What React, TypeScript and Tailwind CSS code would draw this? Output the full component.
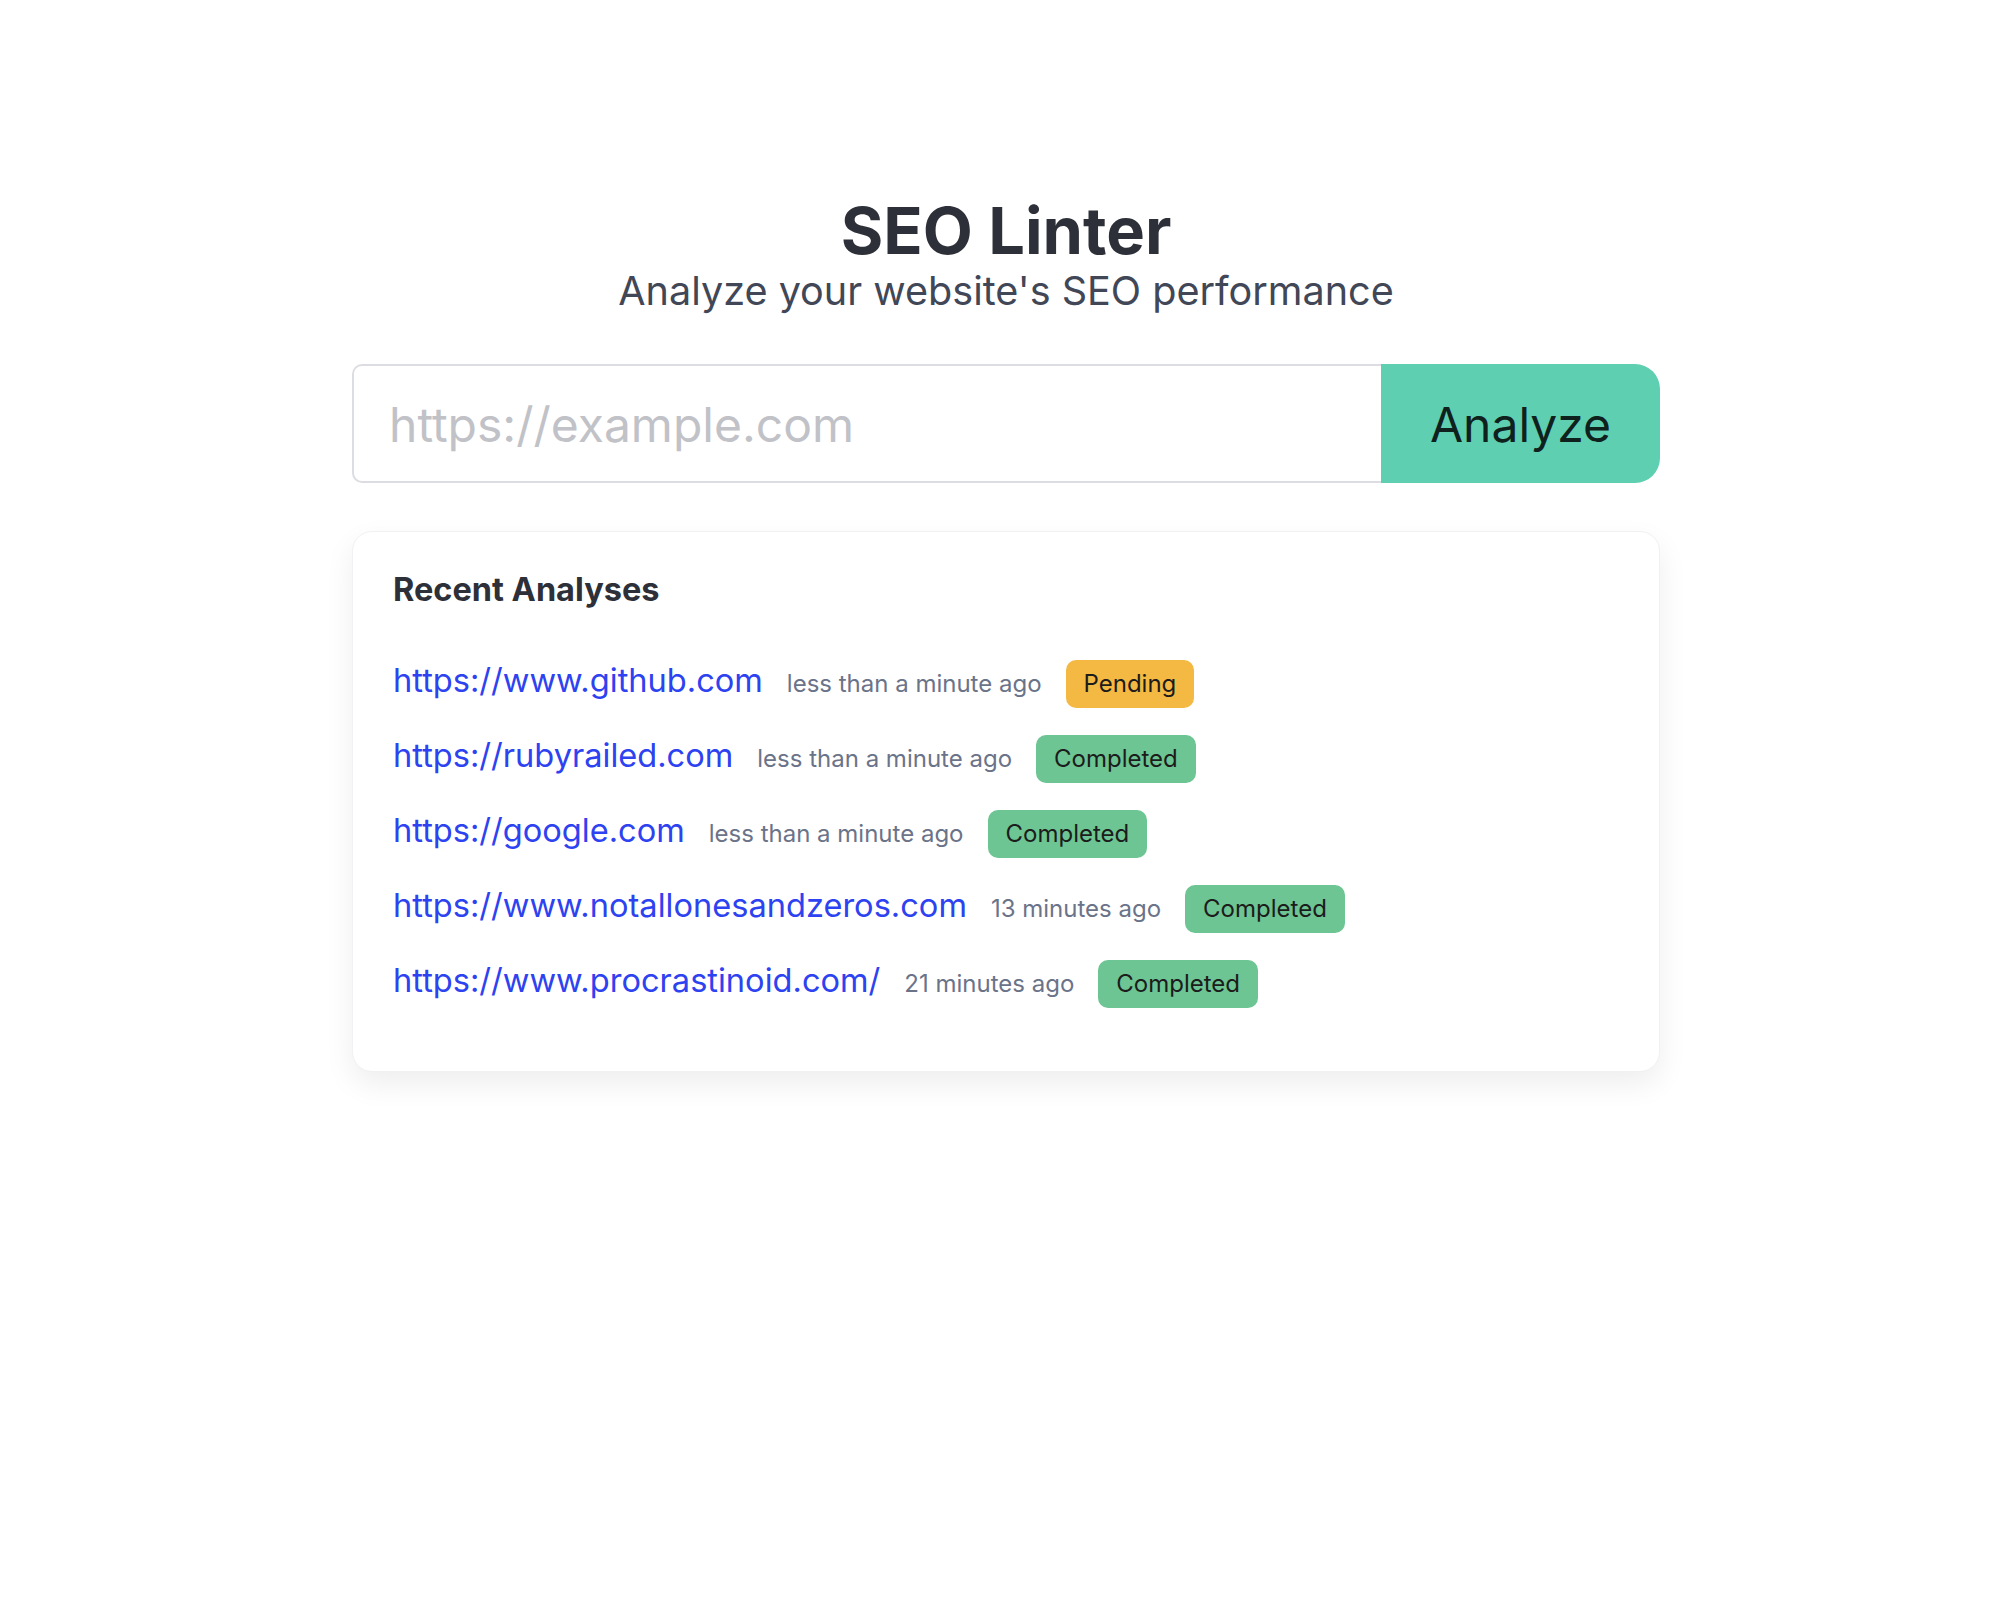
const analyses = [
  { url: 'https://www.github.com', time: 'less than a minute ago', status: 'Pending' },
  { url: 'https://rubyrailed.com', time: 'less than a minute ago', status: 'Completed' },
  { url: 'https://google.com', time: 'less than a minute ago', status: 'Completed' },
  { url: 'https://www.notallonesandzeros.com', time: '13 minutes ago', status: 'Completed' },
  { url: 'https://www.procrastinoid.com/', time: '21 minutes ago', status: 'Completed' },
]

export default function App() {
  return (
    <div className="min-h-screen bg-white pl-[12px] pt-[198px] font-['Inter',sans-serif]">
      <div className="mx-auto w-[1308px]">
        {/* Header */}
        <h1 className="text-center text-[65px] font-bold leading-none text-[#2d3038]">
          SEO Linter
        </h1>
        <p className="mt-[4px] text-center text-[39.6px] leading-[48px] text-[#414756]">
          Analyze your website's SEO performance
        </p>

        {/* Form */}
        <form className="mt-[49px] flex h-[119px]">
          <input
            type="text"
            placeholder="https://example.com"
            className="min-w-0 flex-1 rounded-l-[10px] border-2 border-r-0 border-[#dcdde3] bg-white px-[35px] pt-[2px] text-[48px] text-[#2d3038] outline-none placeholder:text-[#c1c2c7]"
          />
          <button
            type="button"
            className="w-[279px] rounded-r-[25px] bg-[#5ecfb1] pt-[2px] text-[48px] text-[#0f211c]"
          >
            Analyze
          </button>
        </form>

        {/* Recent */}
        <div className="mt-[48px] rounded-[20px] border border-[#f1f1f3] bg-white px-10 pt-10 pb-[38px] shadow-[0_12px_30px_rgba(0,0,0,0.07)]">
          <h2 className="mb-[50px] text-[32.5px] font-bold leading-9 text-[#2d3038]">
            Recent Analyses
          </h2>
          <ul>
            {analyses.map((a) => (
              <li key={a.url} className="mb-6 flex h-[51px] items-center gap-6">
                <a href="#" className="pb-[6px] text-[32.6px] text-[#2d42f0]">
                  {a.url}
                </a>
                <span className="text-[24px] text-[#6b7389]">{a.time}</span>
                <span
                  className={
                    a.status === 'Pending'
                      ? 'flex h-12 items-center rounded-[10px] bg-[#f4b942] px-[18px] text-[24px] text-[#1c1c1c]'
                      : 'flex h-12 items-center rounded-[10px] bg-[#6cc592] px-[18px] text-[24px] text-[#1c1c1c]'
                  }
                >
                  {a.status}
                </span>
              </li>
            ))}
          </ul>
        </div>
      </div>
    </div>
  )
}
